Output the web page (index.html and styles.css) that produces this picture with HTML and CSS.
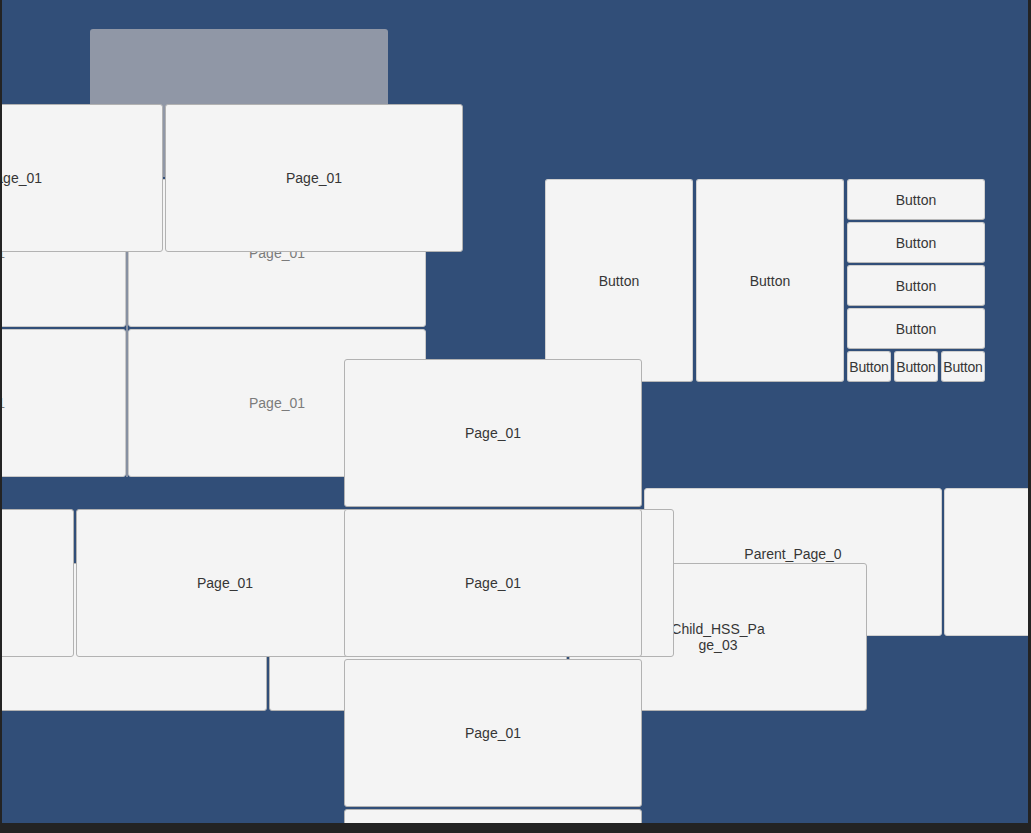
FILE: index.html
```html
<!DOCTYPE html>
<html>
<head>
<meta charset="utf-8">
<link rel="stylesheet" href="styles.css">
</head>
<body>
<div class="viewport">
  <div class="scene">
    <div class="ghost"></div>

    <div class="grid">
      <div class="panel dim"><span>Page_01</span></div>
      <div class="panel dim"><span>Page_01</span></div>
      <div class="panel dim"><span>Page_01</span></div>
      <div class="panel dim"><span>Page_01</span></div>
    </div>
    <div class="grid-divider"></div>

    <div class="row top-row">
      <div class="panel"><span>Page_01</span></div>
      <div class="panel"><span>Page_01</span></div>
    </div>

    <div class="buttons">
      <div class="btn tall">Button</div>
      <div class="btn tall">Button</div>
      <div class="btn-col">
        <div class="btn">Button</div>
        <div class="btn">Button</div>
        <div class="btn">Button</div>
        <div class="btn">Button</div>
        <div class="btn-row">
          <div class="btn small">Button</div>
          <div class="btn small">Button</div>
          <div class="btn small">Button</div>
        </div>
      </div>
    </div>

    <div class="row parent-row">
      <div class="panel soft"><span class="wrap">Parent_Page_01</span></div>
      <div class="panel soft"></div>
    </div>

    <div class="row lower-row">
      <div class="panel"><span>Page_01</span></div>
      <div class="panel"><span>Page_01</span></div>
      <div class="panel"><span class="wrap">Child_HSS_Page_03</span></div>
    </div>

    <div class="row mid-row">
      <div class="panel"><span>Page_01</span></div>
      <div class="panel"><span>Page_01</span></div>
      <div class="panel"><span>Page_01</span></div>
    </div>

    <div class="column">
      <div class="panel"><span>Page_01</span></div>
      <div class="panel"><span>Page_01</span></div>
      <div class="panel"><span>Page_01</span></div>
      <div class="panel"><span>Page_01</span></div>
    </div>
  </div>
</div>
</body>
</html>
```

FILE: styles.css
```css
* { box-sizing: border-box; }

html, body {
  margin: 0;
  padding: 0;
  background: #232323;
}

.viewport {
  width: 1031px;
  height: 833px;
  background: #232323;
  padding: 0 3px 10px 2px;
  overflow: hidden;
}

.scene {
  position: relative;
  width: 1026px;
  height: 823px;
  background: #314e78;
  overflow: hidden;
  font-family: "Liberation Sans", Arial, sans-serif;
  font-size: 14px;
  color: #363636;
}

/* canvas items: their position on the scene is the content */
.ghost,
.grid,
.grid-divider,
.row,
.buttons,
.column {
  position: absolute;
}

.ghost {
  left: 88px;
  top: 29px;
  width: 298px;
  height: 148px;
  background: #9097a6;
  border-radius: 3px;
}

.panel {
  width: 298px;
  height: 148px;
  flex: none;
  background: #f4f4f4;
  border: 1px solid #b2b2b2;
  border-radius: 3px;
  display: flex;
  align-items: center;
  justify-content: center;
  text-align: center;
  line-height: 16px;
  white-space: nowrap;
}

.panel.dim {
  color: #7b7b7b;
  border-color: #c8c8c8;
}

.panel.soft {
  border-color: #d0d0d0;
}

.panel .wrap {
  width: 100px;
  white-space: normal;
  word-break: break-all;
}

.row {
  display: flex;
  gap: 2px;
}

.grid {
  left: -174px;
  top: 179px;
  display: grid;
  grid-template-columns: 298px 298px;
  gap: 2px;
}

.grid-divider {
  left: 124px;
  top: 179px;
  width: 2px;
  height: 298px;
  background: #8790a1;
}

.top-row    { left: -137px; top: 104px; }
.parent-row { left: 642px;  top: 488px; }
.lower-row  { left: -33px;  top: 563px; }
.mid-row    { left: -226px; top: 509px; }

.column {
  left: 342px;
  top: 359px;
  display: flex;
  flex-direction: column;
  gap: 2px;
}

.buttons {
  left: 543px;
  top: 179px;
  display: flex;
  gap: 3px;
  height: 203px;
}

.btn {
  background: #f4f4f4;
  border: 1px solid #cfcfcf;
  border-bottom-color: #b8b8b8;
  border-radius: 3px;
  display: flex;
  align-items: center;
  justify-content: center;
  height: 41px;
  white-space: nowrap;
}

.btn.tall {
  width: 148px;
  height: 203px;
}

.btn-col {
  width: 138px;
  display: flex;
  flex-direction: column;
  gap: 2px;
}

.btn-row {
  display: flex;
  gap: 3px;
}

.btn.small {
  width: 44px;
  height: 31px;
  letter-spacing: -0.2px;
}
```
